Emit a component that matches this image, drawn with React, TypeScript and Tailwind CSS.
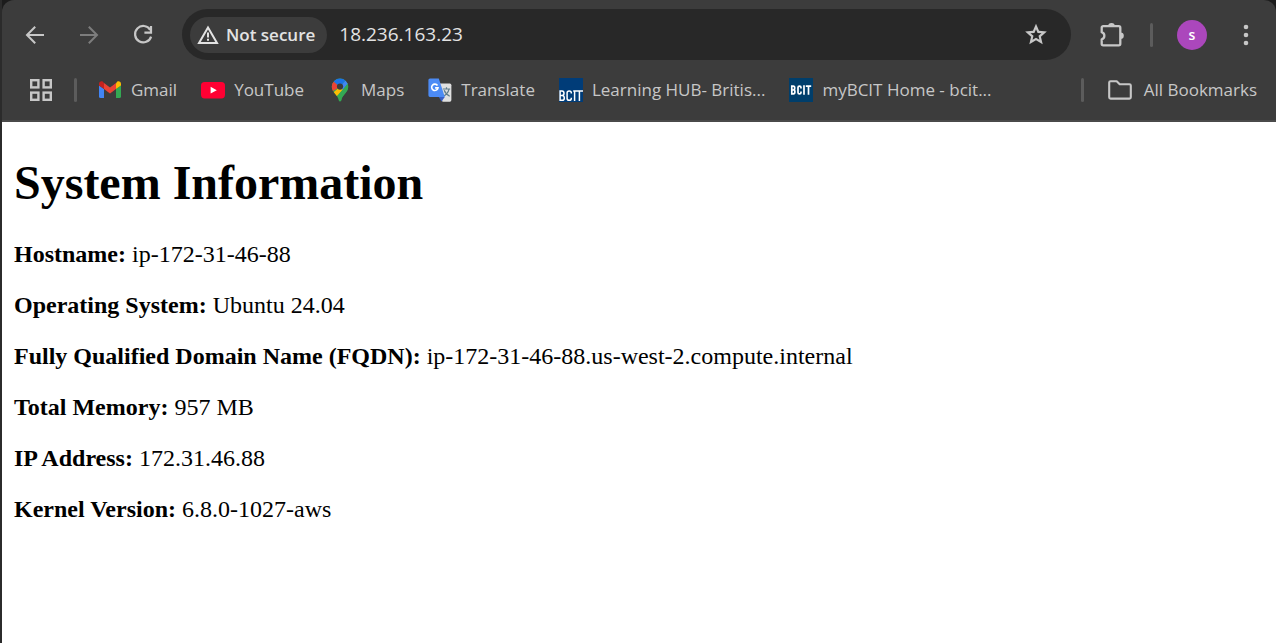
import type { ReactNode } from "react";

const facts = [
  { label: "Hostname", value: "ip-172-31-46-88" },
  { label: "Operating System", value: "Ubuntu 24.04" },
  { label: "Fully Qualified Domain Name (FQDN)", value: "ip-172-31-46-88.us-west-2.compute.internal" },
  { label: "Total Memory", value: "957 MB" },
  { label: "IP Address", value: "172.31.46.88" },
  { label: "Kernel Version", value: "6.8.0-1027-aws" },
];

function IconButton({ label, className = "", children }: { label: string; className?: string; children: ReactNode }) {
  return (
    <button type="button" aria-label={label} className={`flex shrink-0 items-center justify-center ${className}`}>
      {children}
    </button>
  );
}

function BackIcon({ className = "" }: { className?: string }) {
  return (
    <svg width="24" height="24" viewBox="0 0 24 24" fill="none" stroke="currentColor" strokeWidth="2" className={className}>
      <path d="M21 12H4.5M12.2 3.8 4 12l8.2 8.2" />
    </svg>
  );
}

function ReloadIcon() {
  return (
    <svg width="24" height="24" viewBox="0 0 24 24" fill="none" stroke="currentColor" strokeWidth="2.2">
      <path d="M19.2 6.8A8.2 8.2 0 1 0 20.1 13.6" />
      <path d="M20 3v6.6h-6.6" />
    </svg>
  );
}

function WarningIcon() {
  return (
    <svg width="22" height="20" viewBox="0 0 22 20" fill="none" stroke="currentColor" strokeWidth="2">
      <path d="M11 2.4 20 18H2Z" />
      <path d="M11 7.6v4.8M11 13.8v2" />
    </svg>
  );
}

function StarIcon() {
  return (
    <svg width="27" height="27" viewBox="0 0 24 24" fill="currentColor">
      <path d="m8.85 16.83 3.15-1.9 3.15 1.93-.82-3.6 2.77-2.4-3.65-.33L12 7.13l-1.45 3.37-3.65.32 2.78 2.43ZM5.83 21l1.62-7.03L2 9.25l7.2-.63L12 2l2.8 6.63 7.2.62-5.45 4.72L18.18 21 12 17.27Z" />
    </svg>
  );
}

function ExtensionsIcon() {
  return (
    <svg width="26" height="26" viewBox="0 0 26 26">
      <path
        d="M2.7 5.7a1.5 1.5 0 0 1 1.5-1.5h15.6a1.5 1.5 0 0 1 1.5 1.5v16.1a1.5 1.5 0 0 1-1.5 1.5H4.2a1.5 1.5 0 0 1-1.5-1.5v-4.5a3.7 3.7 0 0 0 0-7.1Z"
        fill="none"
        stroke="currentColor"
        strokeWidth="2.3"
        strokeLinejoin="round"
      />
      <path d="M9.2 4.2a3.3 3.3 0 0 1 6.6 0ZM21.5 10.4a3.3 3.3 0 0 1 0 6.6Z" fill="currentColor" />
    </svg>
  );
}

function MenuIcon() {
  return (
    <svg width="24" height="24" viewBox="0 0 24 24" fill="currentColor">
      <circle cx="12" cy="4" r="2.3" />
      <circle cx="12" cy="12" r="2.3" />
      <circle cx="12" cy="20" r="2.3" />
    </svg>
  );
}

function AppsIcon() {
  return (
    <svg width="22" height="22" viewBox="0 0 22 22" fill="none" stroke="currentColor" strokeWidth="2.4">
      <rect x="1.2" y="1.2" width="7.2" height="7.2" />
      <rect x="13.6" y="1.2" width="7.2" height="7.2" />
      <rect x="1.2" y="13.6" width="7.2" height="7.2" />
      <rect x="13.6" y="13.6" width="7.2" height="7.2" />
    </svg>
  );
}

function GmailIcon() {
  return (
    <svg width="24" height="24" viewBox="0 0 24 24">
      <path d="M1 7.4 6 11v9H2.6A1.6 1.6 0 0 1 1 18.4Z" fill="#4285f4" />
      <path d="M23 7.4 18 11v9h3.4a1.6 1.6 0 0 0 1.6-1.6Z" fill="#34a853" />
      <path d="M18 5.2V11l5-3.6V5.8c0-2-2.3-3.2-3.9-2Z" fill="#fbbc04" />
      <path d="M6 11V5l6 4.5L18 5v6l-6 4.5Z" fill="#ea4335" />
      <path d="M1 5.8v1.6L6 11V5L4.9 3.8C3.3 2.6 1 3.8 1 5.8Z" fill="#c5221f" />
    </svg>
  );
}

function YouTubeIcon() {
  return (
    <svg width="24" height="24" viewBox="0 0 24 24">
      <rect y="4" width="24" height="16.4" rx="3.6" fill="#ff0033" />
      <path d="M9.6 8.8v6.8l6.2-3.4Z" fill="#fff" />
    </svg>
  );
}

function MapsIcon() {
  return (
    <svg width="24" height="24" viewBox="0 0 24 24">
      <clipPath id="pin">
        <path d="M12 .5a8.2 8.2 0 0 0-8.2 8.2c0 5.8 5.8 7.6 7 13.7.3 1.5 2.1 1.5 2.4 0 1.2-6.1 7-7.900 7-13.700A8.200 8.200 0 0 0 12 .5Z" />
      </clipPath>
      <g clipPath="url(#pin)">
        <path d="M0 0h24v24H0Z" fill="#34a853" />
        <path d="M0 19 12 8.7l3.2 2.6L7 20Z" fill="#fbbc04" />
        <path d="M0 16 12 8.7 5.7 3.4 0 2Z" fill="#ea4335" />
        <path d="M5.6 3.5 12 8.9l6.3-7.4L15 0H6Z" fill="#1a73e8" />
        <path d="m12 8.9 7.2-8.3L21 7l-6 5Z" fill="#4285f4" />
        <path d="m20.5 4.6-9 10.8L13 24l11-8V5Z" fill="#34a853" />
      </g>
      <circle cx="12" cy="8.6" r="3.1" fill="#3c3c3c" />
    </svg>
  );
}

function TranslateIcon() {
  return (
    <svg width="24" height="24" viewBox="0 0 24 24">
      <path d="M9 5.6h12.8a1.6 1.6 0 0 1 1.6 1.6v14.9a1.6 1.6 0 0 1-1.6 1.6H14.5Z" fill="#e0e0e0" />
      <path d="m10.5 18.6 6.3.3-3.3 4.5Z" fill="#3a5fc4" />
      <path d="M14.8 11h7.4M18.5 9.3V11M21 11.2c-.7 3.2-2.9 5.6-5.4 7M16.2 12.3c.9 2.6 2.9 4.6 5.5 5.9" fill="none" stroke="#607d8b" strokeWidth="1.2" />
      <path d="M2 .5h8.8l6 18.4H2a1.6 1.6 0 0 1-1.6-1.6V2.1A1.6 1.6 0 0 1 2 .5Z" fill="#4c8bf5" />
      <path d="M9.5 7.5A3.2 3.2 0 1 0 10 9.9H7.1" fill="none" stroke="#fff" strokeWidth="1.6" />
    </svg>
  );
}

function FolderIcon() {
  return (
    <svg width="24" height="20" viewBox="0 0 24 20" fill="none" stroke="currentColor" strokeWidth="2.1" strokeLinejoin="round">
      <path d="M1.2 2.6c0-.8.6-1.4 1.4-1.4h6.1l3 3h9.7c.8 0 1.4.6 1.4 1.4v11.6c0 .8-.6 1.4-1.4 1.4H2.6c-.8 0-1.4-.6-1.4-1.4Z" />
    </svg>
  );
}

function BcitHubIcon() {
  return (
    <svg width="24" height="24" viewBox="0 0 24 24">
      <path d="M0 0h24v24H0Z" fill="#003c78" />
      <g fill="none" stroke="#fff" strokeWidth="1.5">
        <path d="M1.1 12.9v9.4h2.2q2 0 2-2.4t-2-2.5H1.1h2q1.9 0 1.9-2.2t-1.9-2.3Z" />
        <path d="M12.3 15.4v-.7q0-1.8-2.1-1.8t-2.1 1.8v5.8q0 1.8 2.1 1.8t2.1-1.8v-.7M14.2 12.9H24M15.6 12.9V23M20.4 12.9V23" />
      </g>
    </svg>
  );
}

function BcitIcon() {
  return (
    <svg width="24" height="24" viewBox="0 0 24 24">
      <path d="M0 0h24v24H0Z" fill="#003e6b" />
      <g fill="none" stroke="#fff" strokeWidth="1.7">
        <path d="M2.8 8.2v7.6h1.6q1.5 0 1.5-2T4.4 12H3h1.3q1.4 0 1.4-1.9T4.3 8.2Z" />
        <path d="M12 10.4v-.9q0-1.4-1.5-1.4T9 9.5v5q0 1.4 1.5 1.4t1.5-1.4v-.9M15 7.3v9.4M16.8 8.2h5.4M19.5 8.2v8.5" />
      </g>
    </svg>
  );
}

const bookmarks = [
  { name: "Gmail", icon: <GmailIcon />, href: "#gmail" },
  { name: "YouTube", icon: <YouTubeIcon />, href: "#youtube" },
  { name: "Maps", icon: <MapsIcon />, href: "#maps" },
  { name: "Translate", icon: <TranslateIcon />, href: "#translate" },
  { name: "Learning HUB- Britis...", icon: <BcitHubIcon />, href: "#learning-hub" },
  { name: "myBCIT Home - bcit...", icon: <BcitIcon />, href: "#mybcit" },
];

function Toolbar() {
  return (
    <div className="flex h-[60px] items-end pr-[18px] pl-[21px] text-[#c7c7c7]">
      <div className="flex h-[51px] items-center gap-[30px]">
        <IconButton label="Back" className="size-6">
          <BackIcon />
        </IconButton>
        <IconButton label="Forward" className="size-6 text-[#7d7d7d]">
          <BackIcon className="-scale-x-100" />
        </IconButton>
        <IconButton label="Reload" className="size-6">
          <ReloadIcon />
        </IconButton>
      </div>
      <div className="ml-[27px] flex h-[51px] min-w-0 grow items-center rounded-full bg-[#282828] pr-[22px] pl-2">
        <button type="button" className="flex h-9 shrink-0 items-center gap-[7px] rounded-full bg-[#3c3c3c] pr-3 pl-[7px] text-[17px] font-semibold text-[#e3e3e3]">
          <WarningIcon />
          Not secure
        </button>
        <input
          type="text"
          aria-label="Address"
          defaultValue="18.236.163.23"
          className="ml-3 min-w-0 grow bg-transparent text-[19px] text-[#e3e3e3] outline-none"
        />
        <IconButton label="Bookmark this page" className="size-[26px]">
          <StarIcon />
        </IconButton>
      </div>
      <div className="ml-7 flex h-[51px] items-center">
        <IconButton label="Extensions" className="size-[26px]">
          <ExtensionsIcon />
        </IconButton>
        <span className="ml-[25px] h-6 w-[3px] rounded-full bg-[#5c5c5c]" />
        <button
          type="button"
          aria-label="Profile"
          className="ml-6 flex size-[30px] items-center justify-center rounded-full bg-[#ab47bc] text-sm font-semibold text-white"
        >
          s
        </button>
        <IconButton label="Menu" className="ml-[27px] size-6">
          <MenuIcon />
        </IconButton>
      </div>
    </div>
  );
}

function BookmarksBar() {
  return (
    <nav aria-label="Bookmarks" className="flex h-[60px] items-center pr-[19px] pl-7 text-[17px] whitespace-nowrap text-[#c7c7c7]">
      <IconButton label="Apps" className="size-[22px]">
        <AppsIcon />
      </IconButton>
      <span className="ml-[22px] h-6 w-[3px] shrink-0 rounded-full bg-[#5c5c5c]" />
      <div className="ml-[21px] flex min-w-0 gap-6">
        {bookmarks.map((item) => (
          <a key={item.name} href={item.href} className="flex items-center gap-[9px]">
            <span className="shrink-0">{item.icon}</span>
            {item.name}
          </a>
        ))}
      </div>
      <span className="ml-auto h-6 w-[3px] shrink-0 rounded-full bg-[#5c5c5c]" />
      <button type="button" className="ml-6 flex shrink-0 items-center gap-3">
        <FolderIcon />
        All Bookmarks
      </button>
    </nav>
  );
}

export default function App() {
  return (
    <div className="flex min-h-screen flex-col border-l-2 border-[#2b2b2b] bg-[#1c1c1c]">
      <header className="rounded-t-xl border-b-2 border-[#4a4a4a] bg-[#3c3c3c] font-['Open_Sans',sans-serif]">
        <Toolbar />
        <BookmarksBar />
      </header>
      <main className="grow bg-white px-3 pt-[33px] font-['Liberation_Serif',serif] text-2xl text-black">
        <h1 className="mb-[31px] text-5xl leading-[55px] font-bold">System Information</h1>
        <div className="flex flex-col gap-6">
          {facts.map((fact) => (
            <p key={fact.label} className="leading-[27px]">
              <strong>{fact.label}:</strong> {fact.value}
            </p>
          ))}
        </div>
      </main>
    </div>
  );
}
